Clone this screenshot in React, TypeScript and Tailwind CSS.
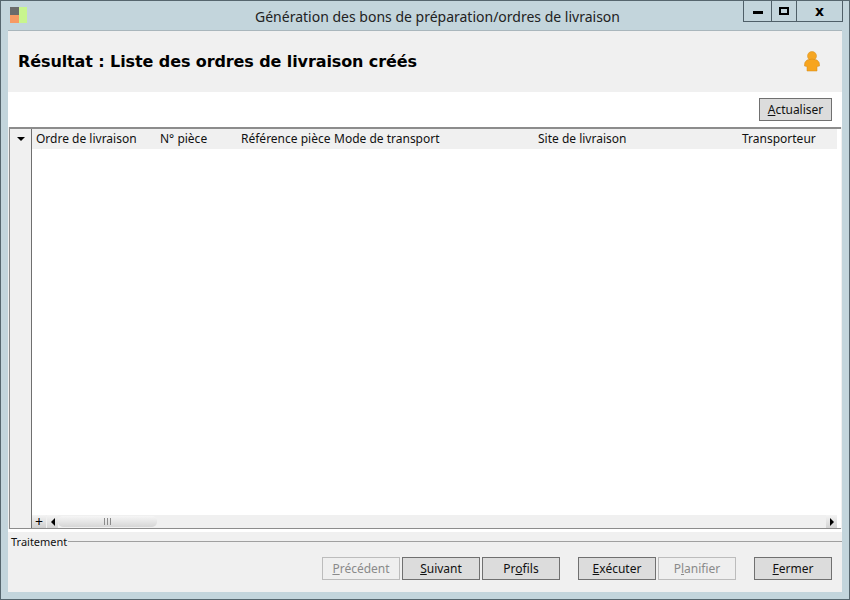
import React from 'react'

const columns = [
  { label: 'Ordre de livraison', width: 'w-[124px]' },
  { label: 'N° pièce', width: 'w-[81px]' },
  { label: 'Référence pièce', width: 'w-[93px]' },
  { label: 'Mode de transport', width: 'w-[204px]' },
  { label: 'Site de livraison', width: 'w-[204px]' },
  { label: 'Transporteur', width: 'flex-1' },
]

const Btn = ({ pre = '', u, post, disabled = false }: { pre?: string; u: string; post: string; disabled?: boolean }) => (
  <button
    type="button"
    className={`w-[78px] h-[23px] border text-[12px] leading-none ${
      disabled ? 'border-[#bcbcbc] bg-[#efefef] text-[#8a8a8a]' : 'border-[#707070] bg-[#dcdcdc] text-[#111]'
    }`}
  >
    {pre}
    <span className="underline">{u}</span>
    {post}
  </button>
)

const App: React.FC = () => {
  return (
    <div className="w-[850px] h-[600px] flex flex-col bg-[#c3d5dc] border border-[#56666e] font-['Noto_Sans',sans-serif] text-[#111] overflow-hidden">
      {/* barre de titre */}
      <div className="h-[29px] shrink-0 flex items-start pl-[9px] relative">
        <svg width="17" height="17" viewBox="0 0 17 17" className="mt-[6px]">
          <rect x="0" y="0" width="9" height="8" fill="#6b6b6b" />
          <rect x="0" y="8" width="9" height="8" fill="#f79a63" />
          <rect x="9" y="0" width="8" height="16" fill="#c8f58e" />
        </svg>
        <div className="flex-1 text-center text-[14px] leading-[31px] text-[#222] pr-[1px]">
          Génération des bons de préparation/ordres de livraison
        </div>
        <div className="absolute right-[6px] top-0 flex h-[21px] border border-t-0 border-[#4f5f68]">
          <div className="w-[28px] flex items-center justify-center border-r border-[#4f5f68]">
            <div className="w-[10px] h-[3px] bg-black mt-[3px]" />
          </div>
          <div className="w-[25px] flex items-center justify-center border-r border-[#4f5f68]">
            <div className="w-[10px] h-[8px] border-2 border-black" />
          </div>
          <div className="w-[45px] flex items-center justify-center text-[14px] font-bold text-black font-['DejaVu_Sans',sans-serif]">
            x
          </div>
        </div>
      </div>

      <div className="flex-1 mx-[7px] mb-[7px] flex flex-col bg-[#f0f0f0] border-t border-[#a9b6bc]">
        {/* entête */}
        <div className="h-[61px] shrink-0 flex items-center justify-between pl-[10px] pr-[21px]">
          <h1 className="text-[16px] font-bold text-black font-['DejaVu_Sans',sans-serif] tracking-[-0.1px]">
            Résultat : Liste des ordres de livraison créés
          </h1>
          <svg width="18" height="21" viewBox="0 0 18 21">
            <circle cx="9" cy="5" r="4.5" fill="#f5a623" stroke="#d98e1a" strokeWidth="0.5" />
            <path d="M4 9 Q9 7 14 9 Q17 11 16.5 15 L14 15.5 L14 20 L4 20 L4 15.5 L1.5 15 Q1 11 4 9 Z" fill="#f7a51f" stroke="#d1891a" strokeWidth="0.5" />
          </svg>
        </div>

        {/* zone blanche */}
        <div className="bg-white h-[35px] shrink-0 flex items-start justify-end pt-[6px] pr-[10px]">
          <button type="button" className="w-[73px] h-[23px] border border-[#707070] bg-[#dcdcdc] text-[12px] leading-none text-[#111]">
            <span className="underline">A</span>ctualiser
          </button>
        </div>

        {/* grille */}
        <div className="h-[402px] shrink-0 ml-[1px] mr-[1px] border-t-2 border-b border-l border-[#8c8c8c] border-t-[#8c8c8c] flex bg-white">
          <div className="w-[22px] shrink-0 bg-[#f0f0f0] border-r border-[#6f6f6f] flex flex-col items-center justify-between">
            <div className="mt-[8px] w-0 h-0 border-l-[4px] border-r-[4px] border-t-[4px] border-l-transparent border-r-transparent border-t-black" />
          </div>
          <div className="flex-1 flex flex-col min-w-0">
            <div className="h-[20px] shrink-0 mr-[4px] bg-[#f0f0f0] flex items-center pl-[4px] text-[12px]">
              {columns.map((c) => (
                <div key={c.label} className={`${c.width} whitespace-nowrap`}>
                  {c.label}
                </div>
              ))}
            </div>
            <div className="flex-1" />
            {/* barre de défilement */}
            <div className="h-[13px] shrink-0 flex items-center bg-[#f0f0f0] mr-[4px]">
              <div className="w-[14px] h-[13px] flex items-center justify-center text-[14px] leading-none bg-gradient-to-b from-[#f4f4f4] to-[#cfcfcf] text-black">
                +
              </div>
              <div className="w-[11px] h-[13px] ml-[1px] flex items-center justify-center bg-gradient-to-b from-[#f4f4f4] to-[#d4d4d4]">
                <div className="w-0 h-0 border-y-[4px] border-r-[4px] border-y-transparent border-r-black" />
              </div>
              <div className="w-[99px] h-[11px] rounded-[5px] bg-gradient-to-b from-[#f6f6f6] to-[#d6d6d6] flex items-center justify-center gap-[2px]">
                <div className="w-px h-[7px] bg-[#8a8a8a]" />
                <div className="w-px h-[7px] bg-[#8a8a8a]" />
                <div className="w-px h-[7px] bg-[#8a8a8a]" />
              </div>
              <div className="flex-1" />
              <div className="w-[11px] h-[13px] flex items-center justify-center bg-gradient-to-b from-[#f4f4f4] to-[#d4d4d4]">
                <div className="w-0 h-0 border-y-[4px] border-l-[4px] border-y-transparent border-l-black" />
              </div>
            </div>
          </div>
        </div>

        {/* pied */}
        <div className="flex-1 flex flex-col">
          <div className="h-[3px] bg-white shrink-0" />
          <div className="flex items-center h-[14px] mt-[2px] shrink-0">
            <span className="pl-[3px] pr-[1px] text-[11px] leading-none">Traitement</span>
            <div className="flex-1 h-px bg-[#a0a0a0]" />
          </div>
          <div className="flex justify-end mt-[9px] pr-[10px]">
            <Btn u="P" post="récédent" disabled />
            <div className="w-[2px]" />
            <Btn u="S" post="uivant" />
            <div className="w-[2px]" />
            <Btn pre="Pr" u="o" post="fils" />
            <div className="w-[18px]" />
            <Btn u="E" post="xécuter" />
            <div className="w-[2px]" />
            <Btn pre="P" u="l" post="anifier" disabled />
            <div className="w-[18px]" />
            <Btn u="F" post="ermer" />
          </div>
        </div>
      </div>
    </div>
  )
}

export default App
